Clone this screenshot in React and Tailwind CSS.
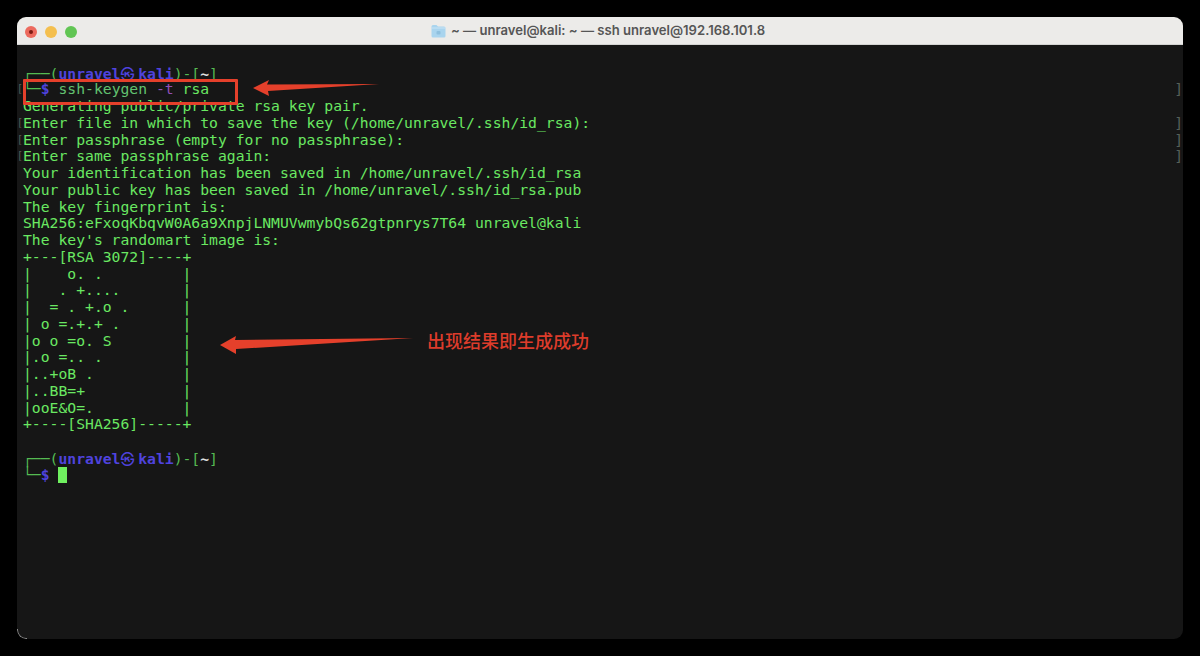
const MONO = "font-['DejaVu_Sans_Mono','Liberation_Mono',monospace]";

const OUTPUT_TOP = [
  { text: 'Generating public/private rsa key pair.' },
  { text: 'Enter file in which to save the key (/home/unravel/.ssh/id_rsa):', mark: true },
  { text: 'Enter passphrase (empty for no passphrase):', mark: true },
  { text: 'Enter same passphrase again:', mark: true },
  { text: 'Your identification has been saved in /home/unravel/.ssh/id_rsa' },
  { text: 'Your public key has been saved in /home/unravel/.ssh/id_rsa.pub' },
  { text: 'The key fingerprint is:' },
  { text: 'SHA256:eFxoqKbqvW0A6a9XnpjLNMUVwmybQs62gtpnrys7T64 unravel@kali' },
  { text: "The key's randomart image is:" },
  { text: '+---[RSA 3072]----+' },
  { text: '|    o. .         |' },
  { text: '|   . +....       |' },
  { text: '|  = . +.o .      |' },
  { text: '| o =.+.+ .       |' },
  { text: '|o o =o. S        |' },
  { text: '|.o =.. .         |' },
  { text: '|..+oB .          |' },
  { text: '|..BB=+           |' },
  { text: '|ooE&O=.          |' },
  { text: '+----[SHA256]-----+' },
];

function Line({ children, mark }) {
  return (
    <div className="relative h-[16.75px] leading-[16.75px] whitespace-pre">
      {mark && <span className="absolute left-[-6px] top-0 text-[9.9px] text-[#56605a]">[</span>}
      {mark && <span className="absolute right-[-3px] top-0 text-[#56605a]">]</span>}
      {children}
    </div>
  );
}

function PromptHead() {
  return (
    <Line>
      <span className="text-[#55bb52]">{'┌──('}</span>
      <span className="font-bold text-[#4f43de]">unravel</span>
      <span className="inline-block w-[17.7px] text-left text-[14px] font-bold text-[#4f43de] font-['Noto_Sans_CJK_KR',sans-serif]">㉿</span>
      <span className="font-bold text-[#4f43de]">kali</span>
      <span className="text-[#55bb52]">{')-['}</span>
      <span className="font-bold text-[#e0e0e0]">~</span>
      <span className="text-[#55bb52]">]</span>
    </Line>
  );
}

function FolderIcon() {
  return (
    <svg width="15" height="14" viewBox="0 0 15 14" className="shrink-0">
      <path d="M0.5 2.5 Q0.5 1 2 1 H5.5 L7 2.5 H13 Q14.5 2.5 14.5 4 V12 Q14.5 13.5 13 13.5 H2 Q0.5 13.5 0.5 12 Z" fill="#a9d4ee" />
      <path d="M0.5 4 H14.5" stroke="#c9e4f5" strokeWidth="1" />
      <rect x="5.5" y="7" width="4" height="3.5" rx="1" fill="#8fc0de" />
    </svg>
  );
}

function Arrow({ className, width, height, points }) {
  return (
    <svg width={width} height={height} viewBox={`0 0 ${width} ${height}`} className={className}>
      <polygon points={points} fill="#e5402b" />
    </svg>
  );
}

export default function App() {
  return (
    <div className="h-[656px] w-[1200px] overflow-hidden bg-black p-[17px]">
      <div className="relative flex h-[622px] w-[1166px] flex-col overflow-hidden rounded-[9px] bg-[#161616]">
        <div className="relative flex h-[28px] shrink-0 items-center justify-center gap-[5px] border-b border-[#d4d4d2] bg-[#ecebe9] pr-[4px]">
          <div className="absolute left-[8px] top-[9px] flex items-center gap-[8px]">
            <span className="flex h-[12px] w-[12px] items-center justify-center rounded-full bg-[#ec6a5e]">
              <span className="h-[4px] w-[4px] rounded-full bg-[#7d1a12]" />
            </span>
            <span className="h-[12px] w-[12px] rounded-full bg-[#f4bf4f]" />
            <span className="h-[12px] w-[12px] rounded-full bg-[#61c554]" />
          </div>
          <FolderIcon />
          <span className="font-['Inter',sans-serif] text-[13.1px] font-semibold text-[#565656]">
            ~ — unravel@kali: ~ — ssh unravel@192.168.101.8
          </span>
        </div>

        <div className={`${MONO} flex-1 pl-[6px] pr-[3px] pt-[19.6px] text-[14.73px] text-[#6ae862]`}>
          <PromptHead />
          <Line mark>
            <span className="text-[#55bb52]">└─</span>
            <span className="font-bold text-[#4f43de]">$</span>
            <span className="text-[#62c270]"> ssh-keygen </span>
            <span className="text-[#9050b8]">-t</span>
            <span> rsa</span>
          </Line>
          {OUTPUT_TOP.map((row, i) => (
            <Line key={i} mark={row.mark}>{row.text}</Line>
          ))}
          <Line> </Line>
          <PromptHead />
          <Line>
            <span className="text-[#55bb52]">└─</span>
            <span className="font-bold text-[#4f43de]">$</span>
            <span> </span>
            <span className="inline-block h-[16px] w-[9px] bg-[#6ff05f] align-top" />
          </Line>
        </div>

        {/* annotations drawn over the terminal */}
        <div className="absolute left-[6px] top-[62px] h-[26px] w-[215px] rounded-[1px] border-[3px] border-[#e5402b]" />
        <Arrow className="absolute left-[236px] top-[62px]" width="126" height="18" points="0,9 16,1 14,5.5 126,5 15,12 16,17" />
        <Arrow className="absolute left-[203px] top-[318px]" width="193" height="20" points="0,10 16,1 15,5 193,3 16,14 16,19" />
        <div className="absolute left-[410px] top-[311px] font-['Noto_Sans_CJK_SC',sans-serif] text-[18px] font-medium leading-[24px] text-[#dd3c2b]">
          出现结果即生成成功
        </div>

        {/* light arc on the window's lower left corner */}
        <div className="absolute bottom-0 left-0 h-[10px] w-[10px] rounded-bl-[9px] border-b border-l border-[#8a8a8a]" />
      </div>
    </div>
  );
}
